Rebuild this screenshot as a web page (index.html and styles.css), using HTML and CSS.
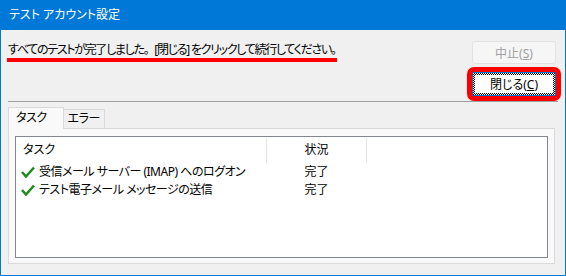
FILE: index.html
```html
<!DOCTYPE html>
<html>

<head>
  <title>テスト アカウント設定</title>
  <link rel="stylesheet" href="styles.css">
</head>

<body>
  <div class="window">
    <div class="titlebar">テスト アカウント設定</div>

    <div class="main">
      <div class="top-row">
        <span class="message">すべてのテストが完了しました<span class="full">。</span>[閉じる] をクリックして続行してください。</span>
        <button class="btn" disabled>中止(<u>S</u>)</button>
      </div>

      <div class="close-row">
        <div class="highlight">
          <button class="btn btn-default"><span class="focus">閉じる(<u>C</u>)</span></button>
        </div>
      </div>

      <div class="separator"></div>

      <div class="tabs">
        <div class="tab active">タスク</div>
        <div class="tab">エラー</div>
      </div>

      <div class="tab-panel">
        <div class="list">
          <div class="list-header">
            <div class="col-task">タスク</div>
            <div class="col-status">状況</div>
          </div>

          <div class="list-row">
            <div class="col-task">
              <svg class="check" width="14" height="12" viewBox="0 0 14 12">
                <path d="M1 6 L5 10.5 L13 1.5" fill="none" stroke="#1f8a1f" stroke-width="2.5" />
              </svg>
              受信メール サーバー (IMAP) へのログオン
            </div>
            <div class="col-status">完了</div>
          </div>

          <div class="list-row">
            <div class="col-task">
              <svg class="check" width="14" height="12" viewBox="0 0 14 12">
                <path d="M1 6 L5 10.5 L13 1.5" fill="none" stroke="#1f8a1f" stroke-width="2.5" />
              </svg>
              テスト電子メール メッセージの送信
            </div>
            <div class="col-status">完了</div>
          </div>
        </div>
      </div>
    </div>
  </div>
</body>

</html>
```

FILE: styles.css
```css
body {
  margin: 0;
  font-family: "Noto Sans", "Noto Sans CJK JP", sans-serif;
  font-size: 12px;
  font-feature-settings: "palt";
  color: #000;
}

.window {
  width: 566px;
  height: 276px;
  box-sizing: border-box;
  border: 1px solid #0078d7;
  border-top: none;
  background-color: #f0f0f0;
  display: flex;
  flex-direction: column;
}

.titlebar {
  height: 30px;
  line-height: 30px;
  padding-left: 9px;
  margin: 0 -1px;
  background-color: #0078d7;
  color: #fff;
}

.main {
  flex: 1;
  padding: 11px 0 0 0;
}

.top-row {
  display: flex;
  justify-content: space-between;
  align-items: flex-start;
  padding: 0 9px 0 6px;
}

.message {
  display: inline-block;
  margin-top: 1px;
  padding: 0 1px;
  line-height: 16px;
  letter-spacing: -1.3px;
  border-bottom: 4px solid #ff0000;
}

.full {
  font-feature-settings: normal;
}

.btn {
  width: 84px;
  height: 23px;
  padding: 0;
  font: inherit;
  border: 1px solid #e3e3e3;
  border-radius: 3px;
  background-color: #f6f6f6;
  color: #a0a0a0;
}

.close-row {
  display: flex;
  justify-content: flex-end;
  padding: 8px 9px 0 0;
}

.highlight {
  outline: 5px solid #ff0000;
  border-radius: 2px;
}

.btn-default {
  display: block;
  height: 24px;
  border: 1px solid #0078d7;
  border-radius: 0;
  background-color: #fff;
  color: #000;
}

.focus {
  display: flex;
  align-items: center;
  justify-content: center;
  height: 100%;
  box-sizing: border-box;
  border: 2px solid transparent;
  background: linear-gradient(#fff, #fff) padding-box,
    repeating-conic-gradient(#000 0 25%, #fff 0 50%) 0 0 / 2px 2px border-box;
}

.separator {
  margin: 5px 7px 0 7px;
  border-top: 1px solid #a0a0a0;
}

.tabs {
  display: flex;
  align-items: flex-end;
  margin: 5px 0 0 7px;
  position: relative;
  z-index: 1;
}

.tab {
  height: 18px;
  line-height: 18px;
  padding: 0 4px 0 4px;
  letter-spacing: -0.5px;
  border: 1px solid #d9d9d9;
  border-bottom: none;
  border-left: none;
  background-color: #f0f0f0;
}

.tab.active {
  height: 21px;
  line-height: 20px;
  padding: 0 16px 0 7px;
  border-left: 1px solid #d9d9d9;
  background-color: #f9f9f9;
  margin-bottom: -1px;
}

.tab-panel {
  height: 136px;
  box-sizing: border-box;
  margin: 0 10px 0 7px;
  padding: 7px 6px 5px 6px;
  border: 1px solid #d9d9d9;
  background-color: #f9f9f9;
}

.list {
  height: 100%;
  box-sizing: border-box;
  border: 1px solid #828790;
  background-color: #fff;
}

.list-header,
.list-row {
  display: flex;
}

.list-header {
  height: 25px;
  line-height: 24px;
  padding-top: 1px;
}

.list-header .col-task {
  width: 243px;
  padding-left: 7px;
  border-right: 1px solid #e5e5e5;
}

.list-header .col-status {
  width: 99px;
  text-align: center;
  border-right: 1px solid #e5e5e5;
}

.list-row {
  height: 18px;
  line-height: 18px;
}

.list-row .col-task {
  width: 246px;
  padding-left: 5px;
  display: flex;
  align-items: center;
  letter-spacing: -0.5px;
}

.list-row .col-status {
  width: 99px;
  text-align: center;
}

.check {
  margin-right: 4px;
  flex: none;
}
```
